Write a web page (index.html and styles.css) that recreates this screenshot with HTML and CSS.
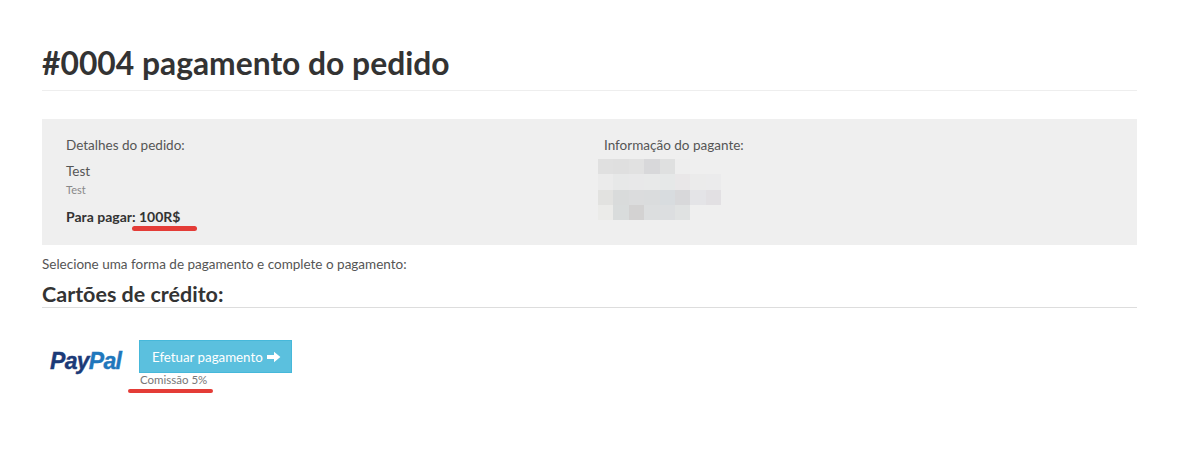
FILE: index.html
```html
<!DOCTYPE html>
<html>
<head>
    <title>Pagamento do pedido</title>
    <link rel="stylesheet" href="styles.css">
</head>
<body>
    <div class="pagina">
        <h1 class="titulo">#0004 pagamento do pedido</h1>

        <div class="painel">
            <div class="coluna coluna-pedido">
                <p class="rotulo">Detalhes do pedido:</p>
                <p class="item-nome">Test</p>
                <p class="item-desc">Test</p>
                <p class="total">Para pagar: <span class="valor">100R$<span class="risco risco-valor"></span></span></p>
            </div>
            <div class="coluna coluna-pagante">
                <p class="rotulo">Informação do pagante:</p>
                <svg class="mosaico" width="123" height="61" viewBox="0 0 8 4" preserveAspectRatio="none" shape-rendering="crispEdges">
                    <rect x="0" y="0" width="1" height="1" fill="#e0e0e0"/>
                    <rect x="1" y="0" width="1" height="1" fill="#dfdfdf"/>
                    <rect x="2" y="0" width="1" height="1" fill="#e1e1e1"/>
                    <rect x="3" y="0" width="1" height="1" fill="#d8d8da"/>
                    <rect x="4" y="0" width="1" height="1" fill="#dfe0e0"/>
                    <rect x="5" y="0" width="1" height="1" fill="#eeeeee"/>
                    <rect x="0" y="1" width="1" height="1" fill="#ebebeb"/>
                    <rect x="1" y="1" width="1" height="1" fill="#e7e8e8"/>
                    <rect x="2" y="1" width="1" height="1" fill="#e8e8e9"/>
                    <rect x="3" y="1" width="1" height="1" fill="#e8e9e9"/>
                    <rect x="4" y="1" width="1" height="1" fill="#e6e8e8"/>
                    <rect x="5" y="1" width="1" height="1" fill="#e9e7e8"/>
                    <rect x="6" y="1" width="1" height="1" fill="#ebebeb"/>
                    <rect x="7" y="1" width="1" height="1" fill="#ebebec"/>
                    <rect x="0" y="2" width="1" height="1" fill="#e2e2e0"/>
                    <rect x="1" y="2" width="1" height="1" fill="#d9dbdb"/>
                    <rect x="2" y="2" width="1" height="1" fill="#dbdcdd"/>
                    <rect x="3" y="2" width="1" height="1" fill="#dadcdd"/>
                    <rect x="4" y="2" width="1" height="1" fill="#d8dcdf"/>
                    <rect x="5" y="2" width="1" height="1" fill="#d8d8da"/>
                    <rect x="6" y="2" width="1" height="1" fill="#e4e4e7"/>
                    <rect x="7" y="2" width="1" height="1" fill="#e2e0e3"/>
                    <rect x="0" y="3" width="1" height="1" fill="#ebebe9"/>
                    <rect x="1" y="3" width="1" height="1" fill="#d9dcdc"/>
                    <rect x="2" y="3" width="1" height="1" fill="#d3d2d2"/>
                    <rect x="3" y="3" width="1" height="1" fill="#dcdedf"/>
                    <rect x="4" y="3" width="1" height="1" fill="#dcdee0"/>
                    <rect x="5" y="3" width="1" height="1" fill="#e0e2e2"/>
                </svg>
            </div>
        </div>

        <p class="instrucao">Selecione uma forma de pagamento e complete o pagamento:</p>
        <h3 class="subtitulo">Cartões de crédito:</h3>

        <div class="metodo">
            <div class="logo-paypal"><span class="pay">Pay</span><span class="pal">Pal</span></div>
            <div class="acao">
                <button type="button" class="btn-pagar">Efetuar pagamento
                    <svg class="seta" width="14" height="12" viewBox="0 0 14 12"><path d="M0 4h7V.8L13.4 6 7 11.2V8H0z" fill="#fff"/></svg>
                </button>
                <p class="comissao">Comissão 5%</p>
                <div class="risco-comissao"></div>
            </div>
        </div>
    </div>
</body>
</html>
```

FILE: styles.css
```css
body {margin: 0; background: #fff; font-family: Lato, Arial, sans-serif; font-size: 13.5px; color: #555;}
p {margin: 0;}
.pagina {width: 1095px; margin-left: 42px; padding-top: 44px;}
.titulo {margin: 0; height: 46px; border-bottom: 1px solid #eee; font-size: 31.8px; line-height: 38px; font-weight: 700; color: #333;}
.painel {display: flex; margin-top: 28px; height: 126px; background: #efefef; padding: 18px 0 0 24px; box-sizing: border-box;}
.coluna-pedido {width: 538px;}
.rotulo {line-height: 16px;}
.item-nome {margin-top: 10px; line-height: 17px;}
.item-desc {margin-top: 3px; font-size: 11px; line-height: 14px; color: #888;}
.total {margin-top: 11px; font-size: 14px; font-weight: 700; color: #333; line-height: 17px;}
.valor {position: relative;}
.risco {position: absolute; height: 5px; border-radius: 3px; background: #e43c37;}
.risco-valor {left: -7px; top: 18px; width: 65px;}
.mosaico {display: block; margin: 6px 0 0 -6px;}
.instrucao {margin-top: 11px; line-height: 17px;}
.subtitulo {margin: 9px 0 0; padding-bottom: 1px; border-bottom: 1px solid #ddd; font-size: 21.5px; line-height: 24px; font-weight: 700; color: #333;}
.metodo {display: flex; margin-top: 32px;}
.logo-paypal {width: 97px; padding: 8px 0 0 8px; box-sizing: border-box; font-family: "Liberation Sans", Arial, sans-serif; font-size: 23px; line-height: 26px; font-weight: 700; font-style: italic; letter-spacing: -.7px; -webkit-text-stroke: .4px;}
.pay {color: #1b3a78;}
.pal {color: #1f77bc;}
.btn-pagar {display: flex; align-items: center; gap: 4px; height: 33px; width: 153px; padding: 0 0 0 12px; border: 1px solid #46b8da; background: #5bc0de; color: #fff; font-family: Lato, Arial, sans-serif; font-size: 13.3px;}
.comissao {margin: 0 0 0 1px; font-size: 11.5px; line-height: 14px; color: #777;}
.risco-comissao {margin: 2px 0 0 -11px; width: 85px; height: 4px; border-radius: 2px; background: #e43c37;}
```
